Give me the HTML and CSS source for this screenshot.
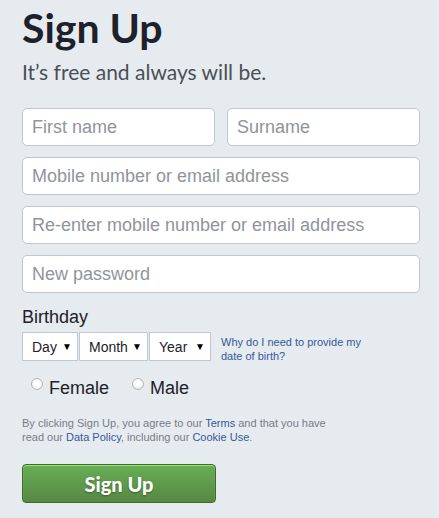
FILE: index.html
```html
<!DOCTYPE html>
<html>
<head>
<meta charset="utf-8">
<link rel="stylesheet" href="styles.css">
</head>
<body>
<div class="page">
  <h1 class="title">Sign Up</h1>
  <p class="subtitle">It’s free and always will be.</p>
  <div class="fields">
    <div class="row">
      <input class="field" type="text" placeholder="First name">
      <input class="field" type="text" placeholder="Surname">
    </div>
    <input class="field" type="text" placeholder="Mobile number or email address">
    <input class="field" type="text" placeholder="Re-enter mobile number or email address">
    <input class="field" type="password" placeholder="New password">
  </div>
  <div class="birthday-label">Birthday</div>
  <div class="birthday">
    <div class="selects">
      <div class="sel sel-day"><span>Day</span><span class="arrow">▼</span></div>
      <div class="sel sel-month"><span>Month</span><span class="arrow">▼</span></div>
      <div class="sel sel-year"><span>Year</span><span class="arrow">▼</span></div>
    </div>
    <a class="why">Why do I need to provide my date of birth?</a>
  </div>
  <div class="gender">
    <label class="opt"><span class="radio"></span>Female</label>
    <label class="opt"><span class="radio"></span>Male</label>
  </div>
  <p class="terms">By clicking Sign Up, you agree to our <a>Terms</a> and that you have read our <a>Data Policy</a>, including our <a>Cookie Use</a>.</p>
  <button class="submit">Sign Up</button>
</div>
</body>
</html>
```
FILE: styles.css
```css
html, body {
  margin: 0;
  padding: 0;
  background: #e6ebef;
}
.page {
  padding: 0 0 0 22px;
  width: 398px;
  font-family: "Liberation Sans", Arial, sans-serif;
}
.title {
  margin: 0;
  padding-top: 4px;
  font-family: Lato, "Open Sans", sans-serif;
  font-weight: 700;
  font-size: 41px;
  line-height: 48px;
  color: #1d2129;
  letter-spacing: 0;
}
.subtitle {
  margin: 7px 0 0;
  font-family: Lato, "Open Sans", sans-serif;
  font-size: 21px;
  line-height: 26px;
  color: #4b4f56;
}
.fields {
  margin-top: 23px;
  display: flex;
  flex-direction: column;
  gap: 11px;
}
.row {
  display: flex;
  gap: 12px;
}
.row .field {
  width: 193px;
  flex: 0 0 193px;
}
.field {
  box-sizing: border-box;
  height: 38px;
  width: 398px;
  border: 1px solid #bdc7d8;
  border-radius: 5px;
  background: #fff;
  padding: 0 9px;
  font-family: "Liberation Sans", Arial, sans-serif;
  font-size: 18px;
  color: #1d2129;
  outline: none;
}
.field::placeholder {
  color: #90949c;
}
.birthday-label {
  margin-top: 13px;
  font-size: 18px;
  line-height: 22px;
  color: #1d2129;
}
.birthday {
  margin-top: 4px;
  display: flex;
  align-items: flex-start;
  gap: 10px;
}
.selects {
  display: flex;
  gap: 1px;
}
.sel {
  box-sizing: border-box;
  height: 29px;
  border: 1px solid #bdc7d8;
  background: #fff;
  display: flex;
  align-items: center;
  justify-content: space-between;
  padding: 0 5px 0 9px;
  font-size: 14px;
  color: #1d2129;
}
.sel-day { width: 56px; }
.sel-month { width: 69px; }
.sel-year { width: 62px; }
.arrow {
  font-size: 10px;
  color: #000;
}
.why {
  width: 150px;
  margin-top: 3px;
  font-size: 11px;
  line-height: 14px;
  color: #365899;
}
.gender {
  margin-top: 14px;
  display: flex;
  gap: 23px;
  padding-left: 9px;
}
.opt {
  display: flex;
  align-items: center;
  font-size: 18px;
  line-height: 22px;
  color: #1d2129;
}
.radio {
  box-sizing: border-box;
  width: 12px;
  height: 12px;
  border-radius: 50%;
  border: 1px solid #b5b5b5;
  background: radial-gradient(circle at 50% 40%, #fff 30%, #e4e4e4 100%);
  margin-right: 6px;
  position: relative;
  top: -4px;
}
.terms {
  margin: 17px 0 0;
  width: 320px;
  font-size: 11px;
  line-height: 14px;
  color: #777d88;
}
.terms a {
  color: #365899;
}
.submit {
  margin-top: 20px;
  box-sizing: border-box;
  width: 194px;
  height: 39px;
  border: 1px solid #3b6e22;
  border-radius: 4px;
  background: linear-gradient(#67ae55, #578843);
  box-shadow: inset 0 1px 1px #a4e388;
  color: #fff;
  font-family: Lato, "Open Sans", sans-serif;
  font-weight: 900;
  font-size: 20px;
  text-shadow: 0 1px 2px rgba(0,0,0,0.35);
  padding: 0;
}
```
